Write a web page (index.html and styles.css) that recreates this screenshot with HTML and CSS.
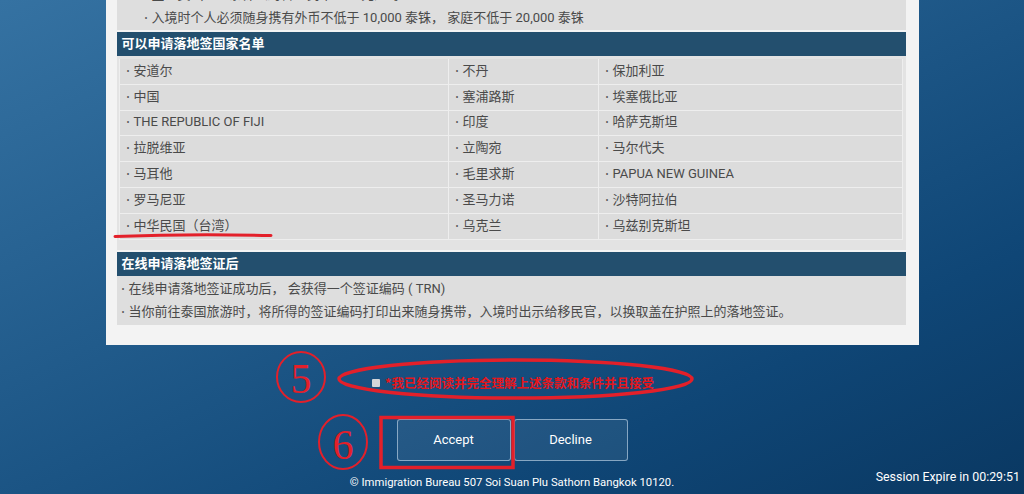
FILE: index.html
```html
<!doctype HTML>
<html>
    <head>
        <title>Visa on Arrival - Terms</title>
        <meta content="text/html;charset=utf-8" http-equiv="Content-Type">
        <meta name="viewport" content="width=device-width, initial-scale=1">
        <link rel="stylesheet" href="styles.css">
    </head>

    <body>
        <div class="page">
            <div class="panel">
                <div class="block notes">
                    <p class="dot">签证费 2,000 泰铢（约合人民币 400 元）每人</p>
                    <p class="dot">入境时个人必须随身携有外币不低于 10,000 泰铢， 家庭不低于 20,000 泰铢</p>
                </div>

                <h2 class="bar">可以申请落地签国家名单</h2>
                <div class="block countries">
                    <table>
                        <colgroup>
                            <col class="c1"><col class="c2"><col class="c3">
                        </colgroup>
                        <tr><td class="dot">安道尔</td><td class="dot">不丹</td><td class="dot">保加利亚</td></tr>
                        <tr><td class="dot">中国</td><td class="dot">塞浦路斯</td><td class="dot">埃塞俄比亚</td></tr>
                        <tr><td class="dot">THE REPUBLIC OF FIJI</td><td class="dot">印度</td><td class="dot">哈萨克斯坦</td></tr>
                        <tr><td class="dot">拉脱维亚</td><td class="dot">立陶宛</td><td class="dot">马尔代夫</td></tr>
                        <tr><td class="dot">马耳他</td><td class="dot">毛里求斯</td><td class="dot">PAPUA NEW GUINEA</td></tr>
                        <tr><td class="dot">罗马尼亚</td><td class="dot">圣马力诺</td><td class="dot">沙特阿拉伯</td></tr>
                        <tr><td class="dot">中华民国（台湾）</td><td class="dot">乌克兰</td><td class="dot">乌兹别克斯坦</td></tr>
                    </table>
                </div>

                <h2 class="bar">在线申请落地签证后</h2>
                <div class="block after">
                    <p class="dot">在线申请落地签证成功后， 会获得一个签证编码 ( TRN)</p>
                    <p class="dot">当你前往泰国旅游时，将所得的签证编码打印出来随身携带，入境时出示给移民官，以换取盖在护照上的落地签证。</p>
                </div>
            </div>

            <label class="agree"><span class="box"></span>*我已经阅读并完全理解上述条款和条件并且接受</label>

            <div class="actions">
                <button class="btn">Accept</button>
                <button class="btn">Decline</button>
            </div>

            <p class="footer">© Immigration Bureau 507 Soi Suan Plu Sathorn Bangkok 10120.</p>
            <p class="session">Session Expire in 00:29:51</p>

            <!-- red marks drawn on top of the screenshot -->
            <svg class="marks" width="1024" height="494" viewBox="0 0 1024 494">
                <path d="M115 236.5 Q190 233.5 271 235.5" />
                <ellipse cx="301" cy="377" rx="24" ry="25" />
                <text x="301" y="393">5</text>
                <ellipse cx="515.5" cy="379" rx="176.5" ry="19" class="thick" />
                <ellipse cx="343" cy="442" rx="24" ry="27" />
                <text x="343" y="459">6</text>
                <rect x="381" y="417.5" width="132" height="50" class="thick" />
            </svg>
        </div>
    </body>
</html>
```

FILE: styles.css
```css
html, body {
    margin: 0;
    padding: 0;
}

.page {
    position: relative;
    height: 494px;
    overflow: hidden;
    background: linear-gradient(155deg, #3572a2 0%, #215b8b 40%, #0f4676 75%, #0a3862 100%);
    font-family: Roboto, "Noto Sans CJK SC", sans-serif;
}

.panel {
    width: 789px;
    margin: -16px auto 0;
    padding: 0 13px 20px 11px;
    background: #f3f3f3;
    color: #4a4a4a;
    font-size: 13px;
}

.panel p {
    margin: 0;
    line-height: 22px;
}

.dot::before {
    content: "•";
    font-size: 9px;
    margin-right: 4px;
    position: relative;
    top: -1px;
    color: #555;
}

.block {
    background: #e3e3e3;
}

.notes {
    background: #dedede;
    padding: 0 0 0 28px;
    margin-bottom: 2px;
}

.bar {
    margin: 0;
    height: 24px;
    line-height: 24px;
    padding-left: 5px;
    background: #234f6e;
    color: #fff;
    font-size: 13px;
    font-weight: bold;
}

.countries {
    padding: 3px 4px 10px 2px;
    margin-bottom: 2px;
}

.countries table {
    width: 783px;
    border-collapse: collapse;
    table-layout: fixed;
}

.countries col.c1 { width: 329px; }
.countries col.c2 { width: 150px; }
.countries col.c3 { width: 304px; }

.countries td {
    height: 24.8px;
    padding: 0 0 0 7px;
    background: #dcdcdc;
    border: 1px solid #eeeeee;
    border-top: none;
    line-height: 16px;
    white-space: nowrap;
}

.after {
    padding: 2px 0 1px 5px;
    background: #dedede;
}

.agree {
    display: flex;
    align-items: center;
    justify-content: center;
    height: 20px;
    margin-top: 28px;
    color: #e5161c;
    font-size: 12.5px;
    font-weight: bold;
    font-family: "Noto Sans CJK SC", sans-serif;
    padding-left: 2px;
}

.agree .box {
    width: 8px;
    height: 8px;
    margin-right: 5px;
    background: #d4d6da;
    border-radius: 1px;
}

.actions {
    display: flex;
    justify-content: center;
    gap: 3px;
    margin-top: 26px;
}

.btn {
    width: 114px;
    height: 42px;
    border: 1px solid rgba(190, 212, 230, 0.65);
    border-radius: 3px;
    background: rgba(255, 255, 255, 0.07);
    color: #fff;
    font-family: Roboto, sans-serif;
    font-size: 13px;
}

.footer {
    margin: 14px 0 0;
    text-align: center;
    line-height: 16px;
    color: #fff;
    font-size: 11.3px;
}

.session {
    position: absolute;
    right: 4px;
    top: 469px;
    margin: 0;
    line-height: 16px;
    color: #fff;
    font-size: 12.4px;
}

.marks {
    position: absolute;
    top: 0;
    left: 0;
    pointer-events: none;
}

.marks path,
.marks ellipse,
.marks rect {
    fill: none;
    stroke: #e3202a;
    stroke-width: 2;
}

.marks path {
    stroke-width: 3;
    stroke-linecap: round;
}

.marks .thick {
    stroke-width: 3.5;
}

.marks text {
    fill: #e3202a;
    font-family: "Liberation Serif", serif;
    font-size: 42px;
    text-anchor: middle;
}
```
